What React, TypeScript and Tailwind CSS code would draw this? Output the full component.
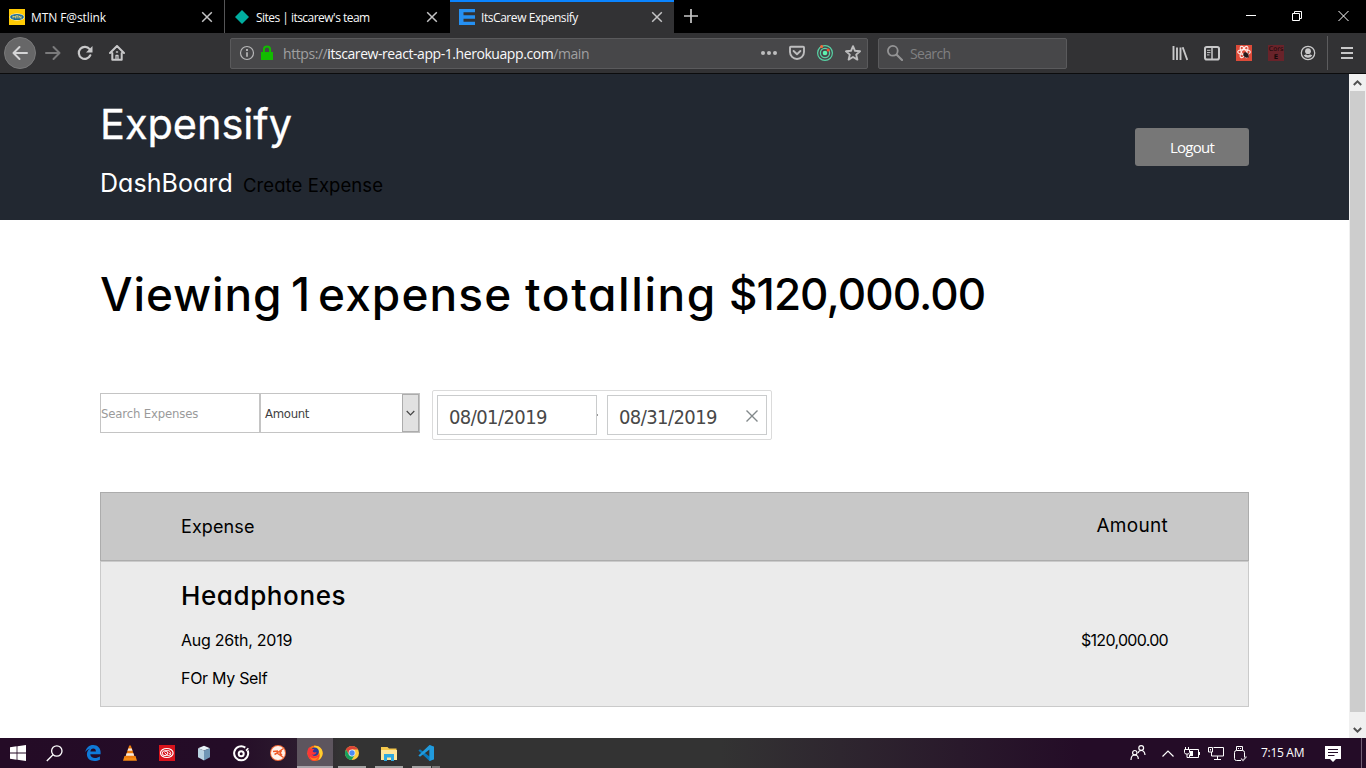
import React from "react";

const poppins = "font-[Inter,sans-serif] [font-feature-settings:'cv11'] whitespace-nowrap";
const segoe = "font-['Open_Sans',sans-serif] whitespace-nowrap";
const tahoma = "font-['DejaVu_Sans_Condensed','DejaVu_Sans',sans-serif] whitespace-nowrap";

function Close({ className = "" }: { className?: string }) {
  return (
    <svg className={"h-3 w-3 " + className} viewBox="0 0 12 12" stroke="#c4c4c5" strokeWidth="1.5" fill="none">
      <path d="M1.2 1.2l9.6 9.6M10.8 1.2L1.2 10.8" />
    </svg>
  );
}

function TabStrip() {
  return (
    <div className={"flex h-[33px] bg-black text-[12px] text-[#f9f9fa] " + segoe}>
      <div className="flex w-[225px] items-center border-r border-[#555557] pl-[9px] pt-px">
        <svg className="h-4 w-4" viewBox="0 0 16 16">
          <rect width="16" height="16" fill="#ffcb05" />
          <ellipse cx="8" cy="8" rx="7.4" ry="3.6" fill="#fff" />
          <ellipse cx="8" cy="8" rx="6.9" ry="3.1" fill="#1b6c93" />
          <path d="M4 9.4V6.8l1.2 1.4 1.2-1.4v2.6M7 6.8h2.2M8.1 6.8v2.6M10 9.4V6.8l2 2.6V6.8" stroke="#ffdf70" strokeWidth=".8" fill="none" />
        </svg>
        <span className="ml-[6px] w-[171px] pt-[2px] tracking-[-0.1px]">MTN F@stlink</span>
        <Close className="-ml-px" />
      </div>
      <div className="flex w-[225px] items-center pl-[9px] pt-px">
        <svg className="h-4 w-4" viewBox="0 0 16 16"><path d="M8 1l7 7-7 7-7-7z" fill="#00ad9f" /></svg>
        <span className="ml-[6px] w-[170px] pt-[2px] tracking-[-0.53px]">Sites | itscarew's team</span>
        <Close />
      </div>
      <div className="flex w-[224px] items-center border-t-2 border-[#0a84ff] bg-[#323234] pb-px pl-[9px]">
        <svg className="h-4 w-4" viewBox="0 0 16 16"><path d="M0 0h16v3.3H4.500v3H16v3.400H4.500v3H16V16H0z" fill="#2590f2" /></svg>
        <span className="ml-[6px] w-[170px] pt-[2px] tracking-[-0.44px]">ItsCarew Expensify</span>
        <Close />
      </div>
      <svg className="ml-[10px] mt-[9px] h-[14px] w-[14px]" viewBox="0 0 14 14" stroke="#c8c8c8" strokeWidth="1.700"><path d="M7 0v14M0 7h14" /></svg>
      <svg className="ml-auto mt-[10px] mr-[17px] h-3 w-[104px]" viewBox="0 0 104 12" stroke="#fff" fill="none">
        <path d="M1 5.500h10" />
        <path d="M47.500 3.500h7v7h-7zM49.500 3.500v-2h7v7h-2" />
        <path d="M93.500 1l10 10M103.500 1l-10 10" />
      </svg>
    </div>
  );
}

function Toolbar() {
  return (
    <div className={"flex h-[41px] items-center border-b border-[#0c0c0d] bg-[#323234] " + segoe}>
      <div className="ml-1 flex h-8 w-8 items-center justify-center rounded-full border border-[#79797a] bg-[#676768]">
        <svg className="h-4 w-4" viewBox="0 0 16 16" stroke="#d5d5d6" strokeWidth="2" fill="none" strokeLinecap="round" strokeLinejoin="round"><path d="M15 8H1.500M7.500 2l-6 6 6 6" /></svg>
      </div>
      <svg className="ml-[9px] h-4 w-4" viewBox="0 0 16 16" stroke="#7b7b7c" strokeWidth="2" fill="none" strokeLinecap="round" strokeLinejoin="round"><path d="M1 8h13.500M8.500 2l6 6-6 6" /></svg>
      <svg className="ml-4 h-4 w-4" viewBox="0 0 16 16"><path d="M13.300 10.300A6 6 0 1 1 12.600 4.200" stroke="#c8c8c9" strokeWidth="2.200" fill="none" strokeLinecap="round" /><path d="M15.500 1v6.500H9z" fill="#c8c8c9" /></svg>
      <svg className="ml-4 h-4 w-4" viewBox="0 0 16 16" stroke="#c8c8c9" strokeWidth="2" fill="none" strokeLinecap="round" strokeLinejoin="round"><path d="M1 8l7-7 7 7M3.300 8v6.800h9.400V8" /><path d="M7 14.500V10.500h2v4" strokeWidth="1.300" /><path d="M7.500 7h1" strokeWidth="1.500" /></svg>
      <div className="ml-[105px] flex h-[31px] w-[638px] items-center rounded-[2px] border border-[#5a5a5c] bg-[#474749]">
        <svg className="ml-2 h-4 w-4" viewBox="0 0 16 16" stroke="#b7b7b8" fill="none"><circle cx="8" cy="8" r="6.500" strokeWidth="1.200" /><path d="M8 7.200v4.500" strokeWidth="1.700" /><path d="M8 4v1.900" strokeWidth="1.900" /></svg>
        <svg className="ml-[6px] h-4 w-3" viewBox="0 0 12 16"><path d="M0 7h12v8H0z" fill="#12bc00" /><path d="M2.900 7.500V4.600a3.100 3.100 0 0 1 6.200 0v2.900" stroke="#12bc00" strokeWidth="2" fill="none" /></svg>
        <span className="ml-[10px] pt-px text-[14px] tracking-[-0.43px] text-[#a0a0a1]">https://<span className="text-[#f9f9fa]">itscarew-react-app-1.herokuapp.com</span>/main</span>
        <svg className="ml-auto h-4 w-4" viewBox="0 0 16 16" fill="#bdbdbe"><circle cx="2" cy="8" r="2" /><circle cx="8" cy="8" r="2" /><circle cx="14" cy="8" r="2" /></svg>
        <svg className="ml-3 h-4 w-4" viewBox="0 0 16 16" stroke="#bdbdbe" strokeWidth="1.900" fill="none" strokeLinecap="round" strokeLinejoin="round"><path d="M1.800 1.800h12.400a.8.8 0 0 1 .8.800V7A7 7 0 0 1 1 7V2.600a.8.8 0 0 1 .8-.8z" /><path d="M4.600 6L8 9.200 11.400 6" /></svg>
        <svg className="ml-3 h-4 w-4" viewBox="0 0 16 16" stroke="#58d3a5" fill="none"><circle cx="8" cy="8" r="7.400" strokeWidth="1.200" /><circle cx="8" cy="8" r="4.600" strokeWidth="1.300" /><circle cx="8" cy="8" r="2.300" fill="#5ff2ae" stroke="none" /><circle cx="4.600" cy="1.600" r="1.500" fill="#f4683a" stroke="none" /><circle cx="11.200" cy="4.900" r="1.500" fill="#f4502e" stroke="none" /></svg>
        <svg className="ml-3 mr-[6px] h-4 w-4" viewBox="0 0 16 16" stroke="#bdbdbe" strokeWidth="1.900" fill="none" strokeLinejoin="round"><path d="M8 1.200l2 4.600 5 .5-3.800 3.300 1.200 5L8 12l-4.400 2.600 1.200-5L1 6.300l5-.5z" /></svg>
      </div>
      <div className="ml-[10px] flex h-[31px] w-[189px] items-center rounded-[2px] border border-[#5a5a5c] bg-[#474749]">
        <svg className="ml-2 h-4 w-4" viewBox="0 0 16 16" stroke="#949495" fill="none" strokeLinecap="round"><circle cx="5.800" cy="5.800" r="4.900" strokeWidth="1.800" /><path d="M9.700 9.700l5.300 5.300" strokeWidth="2.100" /></svg>
        <span className="ml-[7px] pt-px text-[14px] tracking-[-0.65px] text-[#808082]">Search</span>
      </div>
      <svg className="ml-[105px] h-4 w-4" viewBox="0 0 16 16" stroke="#c8c8c9" strokeWidth="2" fill="none"><path d="M1.500 1v14M5 2.500V15M8.500 2.500V15M10.700 2.300L15.300 15" strokeWidth="1.900" /></svg>
      <svg className="ml-4 h-4 w-4" viewBox="0 0 16 16" stroke="#c8c8c9" fill="none"><rect x="1" y="2" width="14" height="12.500" rx="1.800" strokeWidth="2" /><path d="M8 2v12" strokeWidth="1.500" /><path d="M3 5.300h3.500M3 7.600h3.500M3 9.900h2.500" /></svg>
      <svg className="ml-4 h-4 w-4" viewBox="0 0 16 16"><rect width="16" height="16" fill="#dd4b39" /><g stroke="#ffe9e5" strokeWidth="1.100" fill="none"><ellipse cx="8" cy="7" rx="6.300" ry="2.400" /><ellipse cx="8" cy="7" rx="6.300" ry="2.400" transform="rotate(60 8 7)" /><ellipse cx="8" cy="7" rx="6.300" ry="2.400" transform="rotate(120 8 7)" /></g><ellipse cx="10" cy="10" rx="2.200" ry="2.900" fill="#25191a" transform="rotate(-40 10 10)" /><path d="M7 10l6 2M9 7.500l3 5M8 12.500l4.500-4" stroke="#25191a" strokeWidth=".8" /></svg>
      <div className="ml-4 flex h-4 w-4 flex-col items-center bg-[#69232a] font-['DejaVu_Sans',sans-serif] text-[6.500px] leading-[8px] text-[#160a0b]"><span>Cors</span><span className="font-bold">E</span></div>
      <svg className="ml-4 h-4 w-4" viewBox="0 0 16 16"><circle cx="8" cy="8" r="6.700" fill="none" stroke="#c8c8c9" strokeWidth="1.300" /><circle cx="8" cy="6.200" r="2.900" fill="#c8c8c9" /><path d="M3.700 10.500c1.400-1 2-1 2.500-.9.900.9 2.700.9 3.600 0 .5-.1 1.100-.1 2.500.9a5.200 5.200 0 0 1-8.600 0z" fill="#c8c8c9" /></svg>
      <div className="ml-[11px] h-[34px] w-px bg-[#5c5c5e]" />
      <svg className="ml-[11px] h-4 w-4" viewBox="0 0 16 16" stroke="#c8c8c9" strokeWidth="2"><path d="M2 3h12M2 8h12M2 13h12" /></svg>
    </div>
  );
}

function Page() {
  return (
    <div className={"flex-1 bg-white text-black " + poppins}>
      <header className="flex h-[146px] justify-between bg-[#222831] pl-[100px] pr-[100px]">
        <div className="pt-5">
          <h1 className="h-[60px] text-[41.500px] leading-[60px] tracking-[-0.050px] text-white [-webkit-text-stroke:0.3px_#fff]">Expensify</h1>
          <nav className="mt-[11px] flex h-9 items-baseline leading-9">
            <a className="w-[143px] text-[25px] tracking-[0.050px] text-white">DashBoard</a>
            <a className="text-[18.500px] tracking-[0.080px]">Create Expense</a>
          </nav>
        </div>
        <button className={"mt-[54px] flex h-[38px] w-[114px] items-center justify-center rounded-[3px] bg-[#777] text-[15px] tracking-[-0.75px] text-white " + segoe}>Logout</button>
      </header>
      <main className="px-[100px]">
        <h2 className="mt-11 flex h-[60px] text-[46px] leading-[60px] font-medium">
          <span className="w-[191px] tracking-[0.85px]">Viewing </span>
          <span className="w-[27px]">1 </span>
          <span className="w-[207px] tracking-[1.100px]">expense </span>
          <span className="w-[204px] tracking-[1.600px]">totalling </span>
          <span className="text-[44px] tracking-[-0.900px]">$120,000.00</span>
        </h2>
        <div className={"mt-[66px] flex h-[50px] items-start text-[13px] " + tahoma}>
          <div className="mt-[3px] flex h-10 w-[160px] items-center border border-[#c4c4c4] pt-[2px] tracking-[-0.16px] text-[#9a9a9a]">Search Expenses</div>
          <div className="mt-[3px] flex h-10 w-[160px] items-center justify-between border border-[#c4c4c4] pl-1 tracking-[-0.3px] text-[#3f3f3f]">
            <span className="pt-[2px]">Amount</span>
            <span className="flex h-[38px] w-[17px] items-center justify-center border border-[#acacac] bg-[#e1e1e1]">
              <svg className="h-2 w-[9px]" viewBox="0 0 9 8" stroke="#444" strokeWidth="1.200" fill="none"><path d="M.7 2l3.800 3.800L8.300 2" /></svg>
            </span>
          </div>
          <div className="ml-3 flex h-[50px] w-[340px] items-center rounded-[2px] border border-[#dbdbdb] px-1 text-[20px] tracking-[-0.58px] text-[#484848]">
            <div className="flex h-10 w-[160px] items-center border border-[#cacccd] pl-[11px] pt-[3px]">08/01/2019</div>
            <div className="flex w-[10px]"><span className="h-[2px] w-px bg-[#999]" /></div>
            <div className="flex h-10 w-[160px] items-center border border-[#cacccd] pl-[11px] pt-[3px]">
              08/31/2019
              <svg className="mb-px ml-auto mr-2 h-3 w-3" viewBox="0 0 12 12" stroke="#82888a" strokeWidth="1.400"><path d="M.5.500l11 11M11.500.500l-11 11" /></svg>
            </div>
          </div>
        </div>
        <div className="mt-[52px] flex h-[69px] items-center justify-between border border-[#acacac] bg-[#c8c8c8] px-20 text-[18px]">
          <span className="tracking-[0.100px]">Expense</span>
          <span className="text-[19px] tracking-[0.300px]">Amount</span>
        </div>
        <div className="flex h-[146px] items-center justify-between border border-[#cacaca] bg-[#ebebeb] px-20 text-[16px] leading-6">
          <div className="flex h-full flex-col">
            <h3 className="mt-4 h-9 text-[26px] leading-9 font-medium tracking-[0.600px]">Headphones</h3>
            <p className="mt-[14px] tracking-[-0.25px]">Aug 26th, 2019</p>
            <p className="mt-[14px] tracking-[-0.3px]">FOr My Self</p>
          </div>
          <span className="mt-3 tracking-[-0.7px]">$120,000.00</span>
        </div>
      </main>
    </div>
  );
}

function ScrollBar() {
  return (
    <div className="flex w-[17px] flex-col bg-[#f0f0f0]">
      <svg className="mt-[5px] ml-1 h-2 w-[9px]" viewBox="0 0 9 8" stroke="#505050" strokeWidth="2" fill="none"><path d="M.8 6l3.700-3.700L8.200 6" /></svg>
      <div className="ml-px mt-1 h-[621px] w-[15px] bg-[#cdcdcd]" />
      <svg className="mt-[14px] ml-1 h-2 w-[9px]" viewBox="0 0 9 8" stroke="#505050" strokeWidth="2" fill="none"><path d="M.8 2l3.700 3.700L8.200 2" /></svg>
    </div>
  );
}

function Slot({ children, className = "" }: { children: React.ReactNode; className?: string }) {
  return <div className={"flex h-[30px] w-9 items-center justify-center " + className}>{children}</div>;
}

function TaskBar() {
  return (
    <div className="flex h-[30px] items-center gap-px bg-[linear-gradient(90deg,#240b26_0,#240c27_230px,#2c1b2e_297px,#333333_340px,#333333_720px,#240c27_1080px,#240c27_100%)]">
      <Slot><svg className="h-4 w-4" viewBox="0 0 16 16" fill="#fff"><path d="M0 2.200l6.600-.9v6.200H0zM7.400 1.200L16 0v7.500H7.400zM0 8.400h6.600v6.300L0 13.800zM7.400 8.400H16V16l-8.600-1.200z" /></svg></Slot>
      <Slot className="-ml-px mr-[2px]"><svg className="h-[17px] w-[17px]" viewBox="0 0 17 17" stroke="#fff" strokeWidth="1.300" fill="none"><circle cx="10.800" cy="6" r="5.200" /><path d="M7 9.800L.8 16" /></svg></Slot>
      <Slot><svg className="h-4 w-4" viewBox="0 0 16 16"><path d="M.4 7.200C.9 2.700 4.200 0 8.200 0c4.600 0 7.400 3.300 7.400 7.300v2H5.300c.2 2.500 2.100 3.700 4.600 3.700 1.900 0 3.600-.6 5-1.500v3.200c-1.500.9-3.500 1.300-5.500 1.300-4.400 0-7.500-2.500-7.500-6.700 0-2.500 1.300-4.700 3.500-5.800C2.700 4.200 1.200 5.600.4 7.200zM5.400 6.400h5.500C10.900 4.500 10 3.400 8.300 3.400S5.600 4.500 5.400 6.400z" fill="#0f7ad8" /></svg></Slot>
      <Slot><svg className="h-4 w-4" viewBox="0 0 16 16"><path d="M2.500 11h11l1.500 4.800H1z" fill="#f58a13" /><path d="M7.200.5h1.600L13 13H3z" fill="#f07c0b" /><path d="M6.300 3.400h3.400l.8 2.400h-5zM4.600 8.300h6.800l.8 2.500H3.800z" fill="#f3e9e0" /></svg></Slot>
      <Slot><svg className="h-4 w-4" viewBox="0 0 16 16" fill="none" stroke="#fff"><rect width="16" height="16" fill="#d8131c" stroke="none" /><ellipse cx="7.800" cy="8" rx="6.300" ry="4.500" strokeWidth="1.200" /><ellipse cx="6" cy="8.200" rx="2.700" ry="2.500" /><path d="M5.500 7.500c.9-2.700 5-2.800 6 0s-2.300 4-3.900 2.400L6 8M9.500 7.700l2.700 2.800" /></svg></Slot>
      <Slot><svg className="h-4 w-4" viewBox="0 0 16 16"><path d="M8 .8l6 2.500L8 5.500 2 3.300z" fill="#e8f3f8" /><path d="M2 3.300l6 2.200v10L2 12.200z" fill="#b9d3e2" /><path d="M14 3.300L8 5.500v10l6-3.300z" fill="#6f96b5" /></svg></Slot>
      <Slot><svg className="h-[17px] w-[17px]" viewBox="0 0 17 17" fill="none" stroke="#fff" strokeWidth="2"><path d="M12.300 2.600a7 7 0 1 0 2.300 2.900" /><circle cx="8.200" cy="8.800" r="2.500" /><path d="M13 5.600l2.300-2.300" strokeWidth="1.600" /></svg></Slot>
      <Slot><svg className="h-4 w-4" viewBox="0 0 16 16"><circle cx="8" cy="8" r="8" fill="#f26b3a" /><circle cx="8" cy="8" r="7" fill="#fff3ec" /><path d="M13.500 3.500L7 8l6.500 4.500M3 6.500l5-.5M4.500 9.500L7 8M11.500 5.500l-1.500 2.500 2 2.500" stroke="#ef5b29" strokeWidth="1.500" fill="none" /></svg></Slot>
      <Slot className="border-b-2 border-[#aaa5ab] bg-[#5d555e] pt-[2px]"><svg className="h-4 w-4" viewBox="0 0 16 16"><circle cx="8" cy="8.200" r="7.700" fill="#ff6a13" /><path d="M7 .8c5-.6 8.700 3 8.700 7.500-.1 3.400-2.200 5.900-4.500 6.900 2.500-3.600 1.800-7-.2-8.600C9 5.500 7.500 4.500 7 .8z" fill="#ffcf2e" /><circle cx="7.700" cy="6.800" r="4.200" fill="#2a3c9b" /><path d="M.5 8C.3 5 1.200 3.200 2.500 2c.2 1 .8 1.800 2.300 1.900l2.700.2-1.800 2c0 1.600 2.500 1.500 3.900.8-.6 2.200-2.500 3.300-4.800 2.500 2.200 3.200 5.500 2.200 7.600.2-.4 3.900-3 6.300-5.500 6.300C3.300 15.800.8 12 .5 8z" fill="#fb3538" /><path d="M3 11.500c2.200 2.500 6.200 2.500 8.300-.2-.8 3-3 4.600-5 4C4.500 14.800 3.300 13 3 11.500z" fill="#ff851b" /></svg></Slot>
      <Slot><div className="flex h-[30px] w-7 items-center justify-center border-b-2 border-[#a3a3a3] pt-[2px]"><svg className="h-[14px] w-[14px]" viewBox="0 0 16 16"><circle cx="8" cy="8" r="8" fill="#ffcd40" /><path d="M1.100 4A8 8 0 0 1 14.900 4H8v4l-3.500 2z" fill="#dc4437" /><path d="M1.100 4A8 8 0 0 0 7.500 16l3.800-6H4.500z" fill="#14a05e" /><circle cx="8" cy="8" r="3.900" fill="#f5f5f5" /><circle cx="8" cy="8" r="3.100" fill="#4b8bf5" /></svg></div></Slot>
      <Slot><div className="flex h-[30px] w-7 items-center justify-center border-b-2 border-[#a3a3a3] pt-[2px]"><svg className="h-[15px] w-4" viewBox="0 0 16 15"><path d="M0 1h6.500L8 2.500h7.500V14H0z" fill="#f5c84c" /><path d="M0 4h16v10H0z" fill="#ffe69a" /><path d="M3 15V8h10v7h-3v-3.500H6V15z" fill="#2ea9e0" /></svg></div></Slot>
      <Slot><div className="flex h-[30px] w-7 flex-col"><div className="flex h-7 items-center justify-center pt-[2px]"><svg className="h-4 w-4" viewBox="0 0 16 16"><path d="M11.500 0L16 1.800v12.400L11.500 16 .4 5.500 2 4.200l9.500 7.300z" fill="#0879bd" /><path d="M11.500 0L16 1.800v12.400L11.500 16V4.500L2 11.800.4 10.500z" fill="#219bdd" /></svg></div><div className="flex gap-px"><div className="h-[2px] w-[19px] bg-[#a3a3a3]" /><div className="h-[2px] w-2 bg-[#777]" /></div></div></Slot>
      <div className="ml-auto flex items-center">
        <svg className="h-4 w-4" viewBox="0 0 16 16" fill="none" stroke="#fff" strokeWidth="1.200"><circle cx="4.800" cy="7.700" r="2.200" /><path d="M1 15c0-3.500 1.600-5 3.800-5s3.500 1.500 3.500 4" /><circle cx="11.200" cy="3" r="2.400" /><path d="M8 8c.5-1.700 1.500-2.500 3.200-2.500 2.200 0 3.500 1.500 3.800 4.500" /></svg>
        <svg className="ml-4 h-[7px] w-3" viewBox="0 0 12 7" fill="none" stroke="#fff" strokeWidth="1.200"><path d="M.5 6.500L6 1l5.500 5.500" /></svg>
        <svg className="ml-[10px] h-3 w-4" viewBox="0 0 16 12" fill="none" stroke="#fff"><path d="M5.500 2.500h9v8h-9v-3M15.500 5v3M.5 2.500h5v3l-1 1.500h-3L.5 5.500zM1.500 0v2.500M4.500 0v2.500M3 7v3.500h2.500" /><path d="M6 4h3v5H6z" fill="#fff" stroke="none" /></svg>
        <svg className="ml-2 h-[14px] w-4" viewBox="0 0 16 14" fill="none" stroke="#fff"><path d="M5.500 1.500h10v8.500H3.500V6M9.500 10v3M6 13.500h7M.5 1.500h4V6h-4zM2.500 3v1.500" /></svg>
        <svg className="ml-[9px] h-[17px] w-[14px]" viewBox="0 0 14 17" fill="none" stroke="#fff"><path d="M3.500 5.500v-4h6v4M5.500 3v1M7.500 3v1M8 15.500H3.500q-2 0-2-2v-6q0-2 2-2h6q2 0 2 2v5" /><path d="M8 13.500l2 2L13.500 11.500" stroke="#bdb5be" strokeWidth="1.300" /></svg>
        <span className={"ml-[14px] w-[64px] text-[12px] tracking-[-0.300px] text-white " + segoe}>7:15 AM</span>
        <svg className="mt-px h-4 w-4" viewBox="0 0 16 16"><path d="M0 0h16v13h-5l-3 3-3-3H0z" fill="#fff" /><path d="M3 3.500h10M3 6.500h10M3 9.500h6.500" stroke="#240c27" /></svg>
        <div className="ml-5 mr-1 h-[30px] w-px bg-[#725f74]" />
      </div>
    </div>
  );
}

export default function App() {
  return (
    <div className="flex h-[768px] w-[1366px] flex-col overflow-hidden">
      <TabStrip />
      <Toolbar />
      <div className="flex h-[664px]">
        <Page />
        <ScrollBar />
      </div>
      <TaskBar />
    </div>
  );
}
